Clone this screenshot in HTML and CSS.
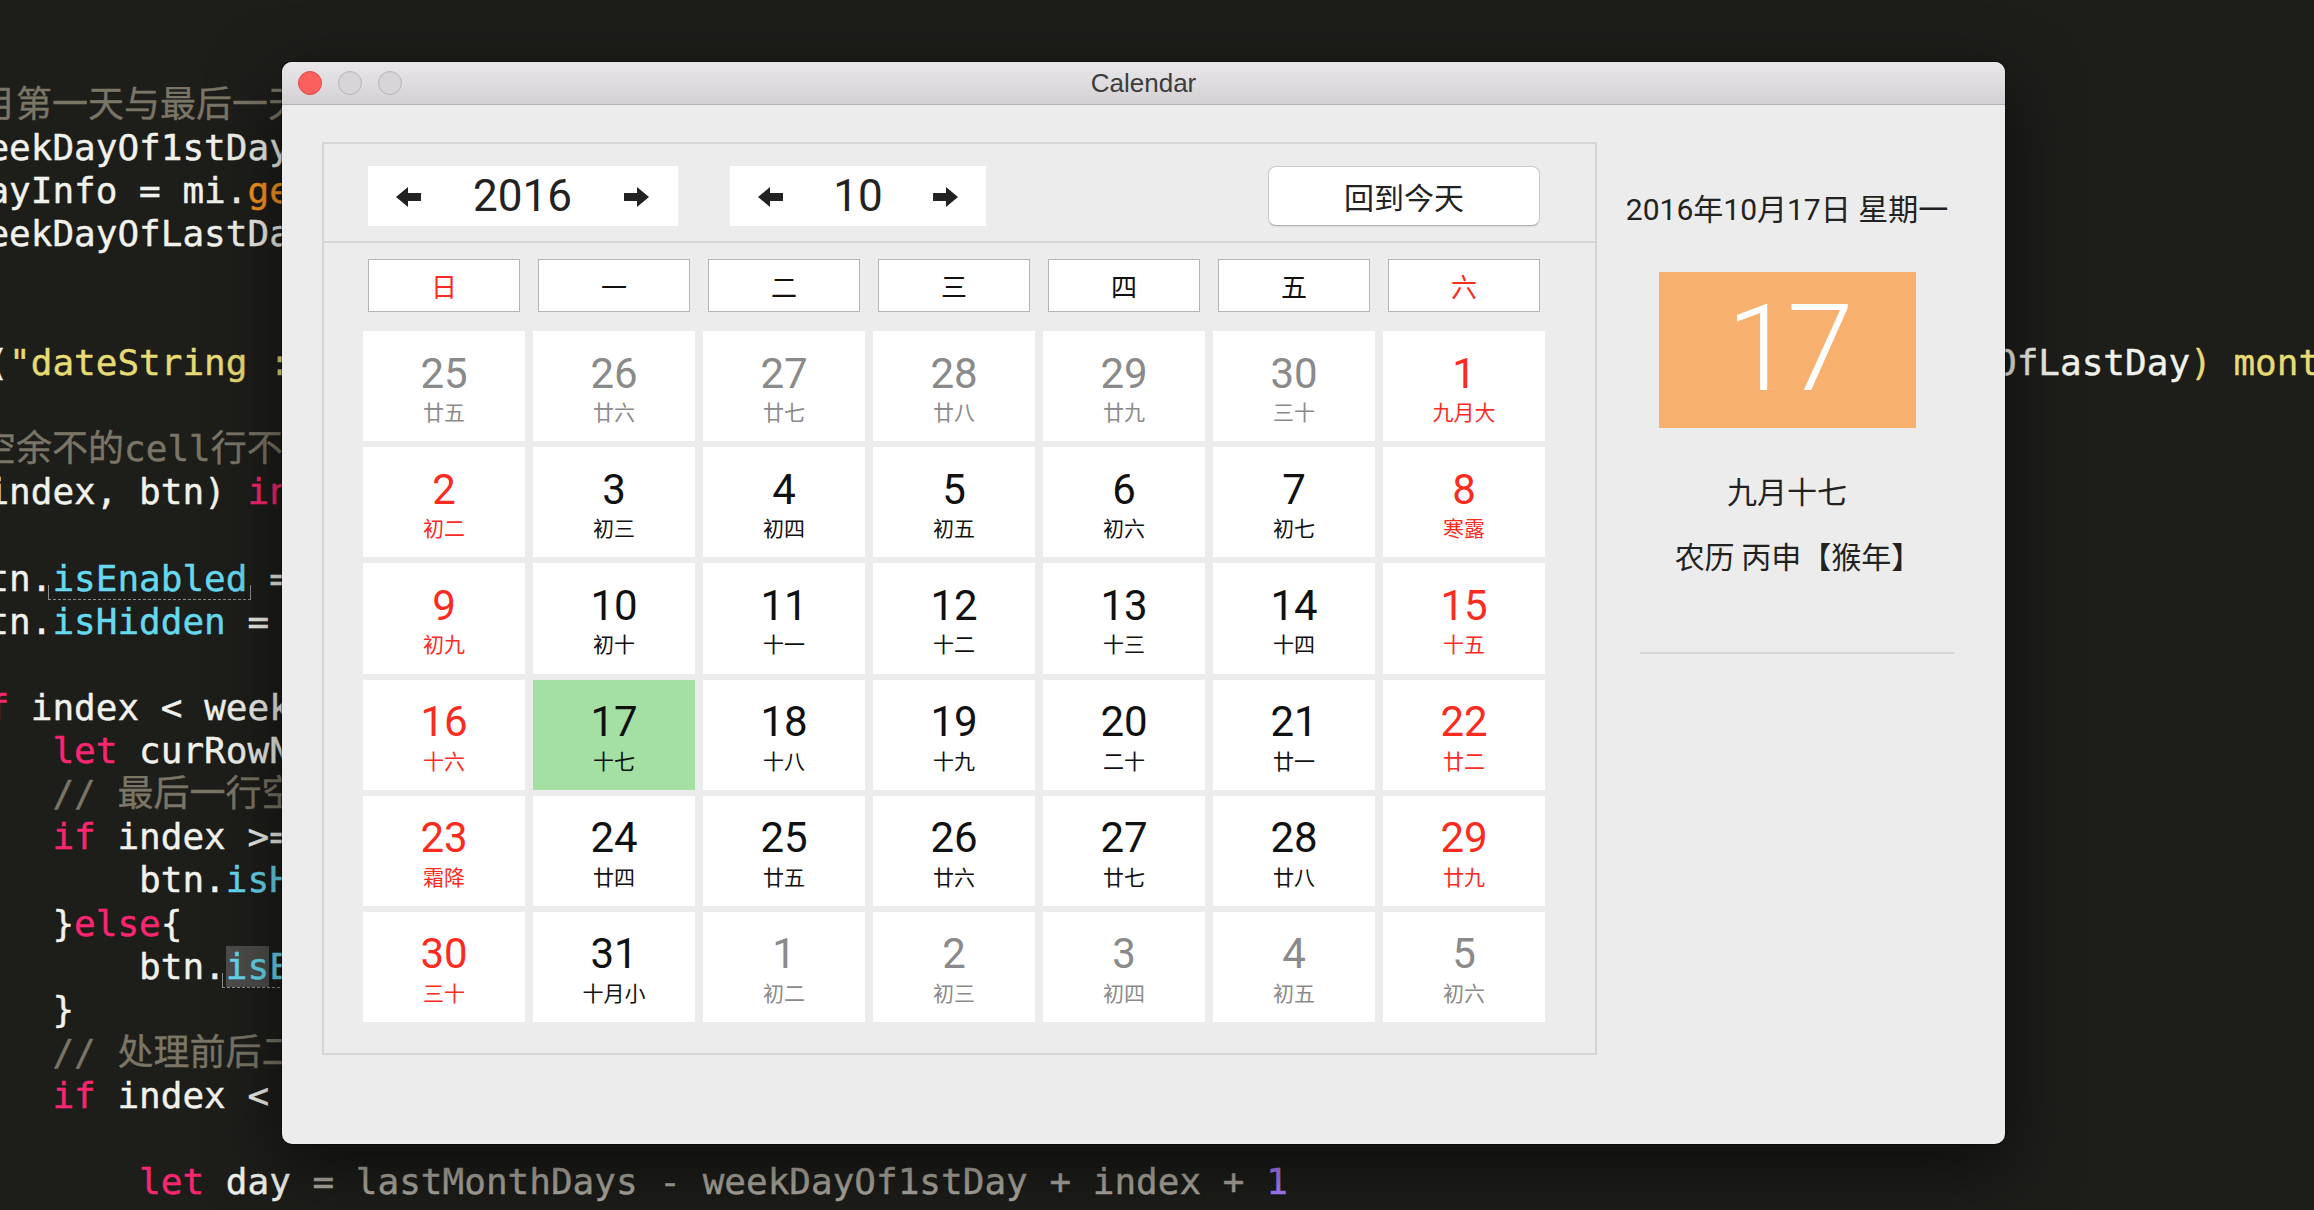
FILE: index.html
```html
<!DOCTYPE html>
<html lang="zh-CN">
<head>
<meta charset="utf-8">
<title>Calendar</title>
<link rel="stylesheet" href="styles.css">
</head>
<body>
<div class="screen">
  <div class="code">
    <div class="ln"><span class="c">// <span class="h">当月第一天与最后一天是星期几</span></span></div>
    <div class="ln"><span class="k">let</span> weekDayOf1stDay = firstDayComponents.weekday! - <span class="n">1</span></div>
    <div class="ln"><span class="k">let</span> dayInfo = mi.<span class="f">getDayInfo</span>(year, month: month)</div>
    <div class="ln"><span class="k">let</span> weekDayOfLastDay = lastDayComponents.weekday! - <span class="n">1</span></div>
    <div class="ln"></div>
    <div class="ln"></div>
    <div class="ln">print(<span class="s">"dateString : \(</span>dateString<span class="s">) <span class="h">本月第一天星期</span> is: \(</span>weekDayOf1stDay<span class="s">) weekDayOfLastDay : \(</span>weekDayOfLastDay<span class="s">) month : \(</span>month<span class="s">)"</span>)</div>
    <div class="ln"></div>
    <div class="ln"><span class="c">// <span class="h">将空余不的</span>cell<span class="h">行不显示</span></span></div>
    <div class="ln"><span class="k">for</span> (index, btn) <span class="k">in</span> buttons.enumerated() {</div>
    <div class="ln"></div>
    <div class="ln">    btn.<span class="p dash">isEnabled</span> = <span class="k">true</span></div>
    <div class="ln">    btn.<span class="p">isHidden</span> = <span class="k">false</span></div>
    <div class="ln"></div>
    <div class="ln">    <span class="k">if</span> index &lt; weekDayOf1stDay {</div>
    <div class="ln">        <span class="k">let</span> curRowNum = (index + <span class="n">1</span>) / <span class="n">7</span></div>
    <div class="ln">        <span class="c">// <span class="h">最后一行空白处理</span></span></div>
    <div class="ln">        <span class="k">if</span> index &gt;= curRowNum * <span class="n">7</span> {</div>
    <div class="ln">            btn.<span class="p">isHidden</span> = <span class="k">true</span></div>
    <div class="ln">        }<span class="k">else</span>{</div>
    <div class="ln">            btn.<span class="p dash"><span class="sel">is</span>Enabled</span> = <span class="k">true</span></div>
    <div class="ln">        }</div>
    <div class="ln">        <span class="c">// <span class="h">处理前后二个月的日期</span></span></div>
    <div class="ln">        <span class="k">if</span> index &lt; weekDayOf1stDay {</div>
    <div class="ln"></div>
    <div class="ln">            <span class="k">let</span> day <span class="d">= lastMonthDays - weekDayOf1stDay + index +</span> <span class="n">1</span></div>
  </div>

  <div class="window">
    <div class="titlebar">
      <div class="lights">
        <span class="light close"></span>
        <span class="light"></span>
        <span class="light"></span>
      </div>
      <div class="title">Calendar</div>
      <div></div>
    </div>

    <div class="content">
      <div class="cal">
        <div class="cal-head">
          <div class="stepper year">
            <svg class="arrow" viewBox="0 0 25 20"><polygon points="0,10 12,0 12,6 25,6 25,14 12,14 12,20"/></svg>
            <span class="step-val">2016</span>
            <svg class="arrow" viewBox="0 0 25 20"><polygon points="25,10 13,0 13,6 0,6 0,14 13,14 13,20"/></svg>
          </div>
          <div class="stepper month">
            <svg class="arrow" viewBox="0 0 25 20"><polygon points="0,10 12,0 12,6 25,6 25,14 12,14 12,20"/></svg>
            <span class="step-val">10</span>
            <svg class="arrow" viewBox="0 0 25 20"><polygon points="25,10 13,0 13,6 0,6 0,14 13,14 13,20"/></svg>
          </div>
          <button class="today-btn">回到今天</button>
        </div>

        <div class="cal-body">
          <div class="weekdays">
            <div class="wd red">日</div>
            <div class="wd">一</div>
            <div class="wd">二</div>
            <div class="wd">三</div>
            <div class="wd">四</div>
            <div class="wd">五</div>
            <div class="wd red">六</div>
          </div>

          <div class="days">
            <div class="cell other"><span class="num">25</span><span class="lunar">廿五</span></div>
            <div class="cell other"><span class="num">26</span><span class="lunar">廿六</span></div>
            <div class="cell other"><span class="num">27</span><span class="lunar">廿七</span></div>
            <div class="cell other"><span class="num">28</span><span class="lunar">廿八</span></div>
            <div class="cell other"><span class="num">29</span><span class="lunar">廿九</span></div>
            <div class="cell other"><span class="num">30</span><span class="lunar">三十</span></div>
            <div class="cell red"><span class="num">1</span><span class="lunar">九月大</span></div>

            <div class="cell red"><span class="num">2</span><span class="lunar">初二</span></div>
            <div class="cell"><span class="num">3</span><span class="lunar">初三</span></div>
            <div class="cell"><span class="num">4</span><span class="lunar">初四</span></div>
            <div class="cell"><span class="num">5</span><span class="lunar">初五</span></div>
            <div class="cell"><span class="num">6</span><span class="lunar">初六</span></div>
            <div class="cell"><span class="num">7</span><span class="lunar">初七</span></div>
            <div class="cell red"><span class="num">8</span><span class="lunar">寒露</span></div>

            <div class="cell red"><span class="num">9</span><span class="lunar">初九</span></div>
            <div class="cell"><span class="num">10</span><span class="lunar">初十</span></div>
            <div class="cell"><span class="num">11</span><span class="lunar">十一</span></div>
            <div class="cell"><span class="num">12</span><span class="lunar">十二</span></div>
            <div class="cell"><span class="num">13</span><span class="lunar">十三</span></div>
            <div class="cell"><span class="num">14</span><span class="lunar">十四</span></div>
            <div class="cell red"><span class="num">15</span><span class="lunar">十五</span></div>

            <div class="cell red"><span class="num">16</span><span class="lunar">十六</span></div>
            <div class="cell today"><span class="num">17</span><span class="lunar">十七</span></div>
            <div class="cell"><span class="num">18</span><span class="lunar">十八</span></div>
            <div class="cell"><span class="num">19</span><span class="lunar">十九</span></div>
            <div class="cell"><span class="num">20</span><span class="lunar">二十</span></div>
            <div class="cell"><span class="num">21</span><span class="lunar">廿一</span></div>
            <div class="cell red"><span class="num">22</span><span class="lunar">廿二</span></div>

            <div class="cell red"><span class="num">23</span><span class="lunar">霜降</span></div>
            <div class="cell"><span class="num">24</span><span class="lunar">廿四</span></div>
            <div class="cell"><span class="num">25</span><span class="lunar">廿五</span></div>
            <div class="cell"><span class="num">26</span><span class="lunar">廿六</span></div>
            <div class="cell"><span class="num">27</span><span class="lunar">廿七</span></div>
            <div class="cell"><span class="num">28</span><span class="lunar">廿八</span></div>
            <div class="cell red"><span class="num">29</span><span class="lunar">廿九</span></div>

            <div class="cell red"><span class="num">30</span><span class="lunar">三十</span></div>
            <div class="cell"><span class="num">31</span><span class="lunar">十月小</span></div>
            <div class="cell other"><span class="num">1</span><span class="lunar">初二</span></div>
            <div class="cell other"><span class="num">2</span><span class="lunar">初三</span></div>
            <div class="cell other"><span class="num">3</span><span class="lunar">初四</span></div>
            <div class="cell other"><span class="num">4</span><span class="lunar">初五</span></div>
            <div class="cell other"><span class="num">5</span><span class="lunar">初六</span></div>
          </div>
        </div>
      </div>

      <div class="side">
        <div class="date-line">2016年10月17日 星期一</div>
        <div class="big-day">17</div>
        <div class="lunar-day">九月十七</div>
        <div class="ganzhi">农历 丙申【猴年】</div>
        <div class="side-rule"></div>
      </div>
    </div>
  </div>
</div>
</body>
</html>
```

FILE: styles.css
```css
* { box-sizing: border-box; }
html, body { margin: 0; padding: 0; }
body {
  width: 2314px;
  height: 1210px;
  overflow: hidden;
  background: #1d1d1a;
  font-family: "Noto Sans CJK SC", sans-serif;
}
.screen {
  position: relative;
  width: 2314px;
  height: 1210px;
  overflow: hidden;
}

/* ---------- code editor background ---------- */
.code {
  padding-top: 82.5px;
  margin-left: -121px;
  font-family: "DejaVu Sans Mono", monospace;
  font-size: 36px;
  color: #f2f2ec;
  -webkit-text-stroke: 0.4px currentColor;
}
.ln {
  height: 43.12px;
  line-height: 43.12px;
  white-space: pre;
}
.k { color: #f92672; }
.c { color: #7a7565; }
.s { color: #e6db74; }
.p { color: #66d9ef; }
.f { color: #fd971f; }
.n { color: #ae81ff; }
.d { color: #b0aca2; }
.h {
  font-family: "Noto Sans CJK SC", sans-serif;
  font-size: 36px;
  line-height: 1;
}
.dash {
  padding: 0 4px;
  margin: 0 -4px;
  border-bottom: 1px dashed #8d8d8d;
  background:
    linear-gradient(#8d8d8d, #8d8d8d) left bottom / 1px 14px no-repeat,
    linear-gradient(#8d8d8d, #8d8d8d) right bottom / 1px 14px no-repeat;
}
.sel { background: #4d4d4b; }

/* ---------- window ---------- */
.window {
  position: absolute;
  left: 282px;
  top: 62px;
  width: 1723px;
  height: 1082px;
  border-radius: 10px;
  background: #ececec;
  overflow: hidden;
  display: flex;
  flex-direction: column;
  box-shadow: 0 0 0 1px rgba(0,0,0,0.35), 0 24px 70px rgba(0,0,0,0.55);
}
.titlebar {
  height: 43px;
  flex: none;
  display: grid;
  grid-template-columns: 1fr auto 1fr;
  align-items: center;
  background: linear-gradient(#e9e7e9, #d3d1d3);
  border-bottom: 1px solid #b3b3b3;
}
.lights {
  display: flex;
  gap: 16px;
  padding-left: 16px;
}
.light {
  width: 24px;
  height: 24px;
  border-radius: 50%;
  background: #d7d5d7;
  border: 1px solid #b5b5b5;
}
.light.close {
  background: #fc605c;
  border-color: #e04a46;
}
.title {
  font-family: "Liberation Sans", "Noto Sans", sans-serif;
  font-size: 26px;
  color: #3c3c3c;
}

.content {
  flex: 1;
  display: flex;
  align-items: flex-start;
  padding: 37px 0 0 40px;
}

/* ---------- calendar panel ---------- */
.cal {
  width: 1275px;
  height: 913px;
  border: 2px solid #d5d5d5;
  display: flex;
  flex-direction: column;
}
.cal-head {
  height: 99px;
  flex: none;
  display: flex;
  align-items: flex-start;
  padding: 22px 55px 0 44px;
  border-bottom: 2px solid #d5d5d5;
}
.stepper {
  height: 60px;
  background: #fff;
  display: flex;
  align-items: center;
  justify-content: space-between;
  padding: 0 28px;
  color: #222;
}
.stepper.year { width: 310px; padding-right: 29px; }
.stepper.month { width: 256px; margin-left: 52px; }
.arrow {
  width: 25px;
  height: 20px;
  fill: #222;
  display: block;
  margin-top: 2px;
}
.step-val {
  font-family: Roboto, "Noto Sans CJK SC", sans-serif;
  font-size: 44px;
  line-height: 44px;
}
.today-btn {
  margin-left: auto;
  width: 272px;
  height: 60px;
  background: #fff;
  border: 1px solid #cacaca;
  border-bottom-color: #b2b2b2;
  border-radius: 8px;
  box-shadow: 0 1px 1px rgba(0,0,0,0.08);
  font-family: "Noto Sans CJK SC", sans-serif;
  font-size: 30px;
  color: #222;
  padding: 0;
}

.cal-body {
  padding: 16px 50px 0 39px;
}
.weekdays {
  display: grid;
  grid-template-columns: repeat(7, 162px);
  column-gap: 8px;
  height: 53px;
}
.wd {
  width: 152px;
  justify-self: center;
  background: #fff;
  border: 1px solid #b5b5b5;
  display: flex;
  align-items: center;
  justify-content: center;
  font-size: 26px;
  color: #111;
}
.wd.red { color: #fc2b1f; }

.days {
  margin-top: 19px;
  display: grid;
  grid-template-columns: repeat(7, 162px);
  grid-auto-rows: 110.2px;
  column-gap: 8px;
  row-gap: 6px;
}
.cell {
  background: #fff;
  display: flex;
  flex-direction: column;
  align-items: center;
  padding-top: 21.5px;
  color: #111;
}
.num {
  font-family: Roboto, "Noto Sans CJK SC", sans-serif;
  font-size: 42px;
  line-height: 42px;
}
.lunar {
  margin-top: 6.5px;
  font-size: 21px;
  line-height: 21px;
}
.cell.other { color: #8a8a8a; }
.cell.red { color: #fc2b1f; }
.cell.today { background: #a4e0a4; }

/* ---------- side panel ---------- */
.side {
  width: 380px;
  display: flex;
  flex-direction: column;
  align-items: center;
  padding-top: 53px;
  color: #222;
}
.date-line {
  font-family: Roboto, "Noto Sans CJK SC", sans-serif;
  font-size: 30px;
  line-height: 30px;
}
.big-day {
  margin-top: 47px;
  width: 257px;
  height: 156px;
  background: #f8b06f;
  color: #fff;
  display: flex;
  align-items: center;
  justify-content: center;
  padding-bottom: 3px;
  font-family: Roboto, sans-serif;
  font-weight: 300;
  font-size: 120px;
  line-height: 120px;
  letter-spacing: -6px;
}
.lunar-day {
  margin-top: 47px;
  font-size: 30px;
  line-height: 30px;
}
.ganzhi {
  margin-top: 35px;
  margin-left: 22px;
  font-size: 30px;
  line-height: 30px;
}
.side-rule {
  margin-top: 82px;
  margin-left: 20px;
  width: 314px;
  height: 2px;
  background: #d6d6d6;
}
```
